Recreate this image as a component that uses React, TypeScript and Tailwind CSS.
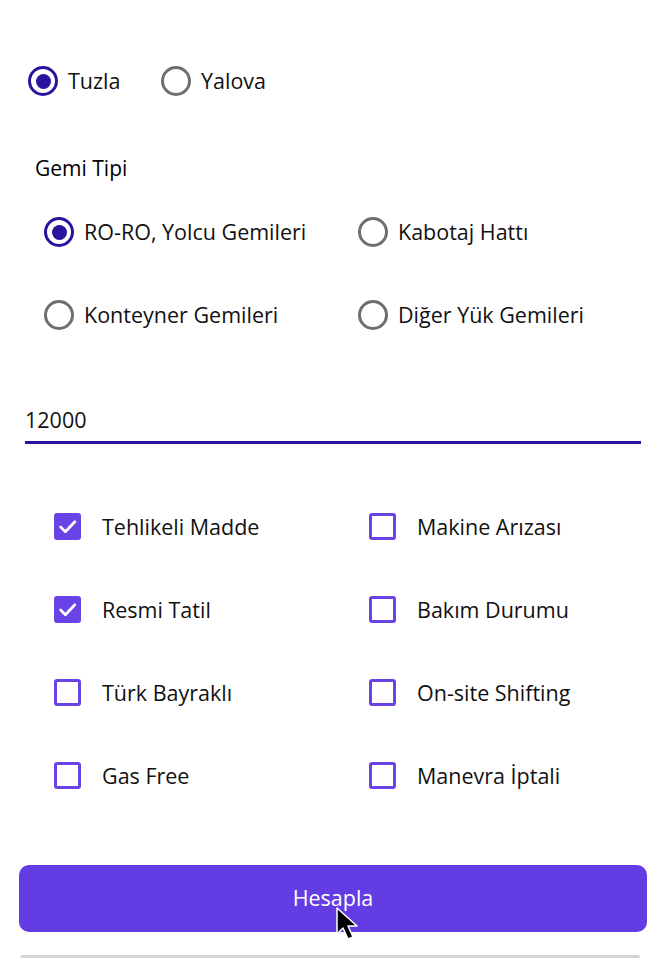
import { useState } from 'react';

const font = { fontFamily: '"Open Sans", "Noto Sans", sans-serif' };

function Radio({ label, checked, onClick }: { label: string; checked: boolean; onClick: () => void }) {
  return (
    <button onClick={onClick} className="flex items-center gap-[10px] h-[30px] text-left">
      <span
        className={`w-[30px] h-[30px] rounded-full border-[3px] flex items-center justify-center shrink-0 ${
          checked ? 'border-[#2b139e]' : 'border-[#6e6e6e]'
        }`}
      >
        {checked && <span className="w-[15px] h-[15px] rounded-full bg-[#2b139e]" />}
      </span>
      <span className="text-[21.5px] leading-[30px] text-[#111]">{label}</span>
    </button>
  );
}

function Check({ label, checked, onClick }: { label: string; checked: boolean; onClick: () => void }) {
  return (
    <button onClick={onClick} className="flex items-center gap-[21px] h-[27px] text-left">
      <span
        className={`w-[27px] h-[27px] rounded-[3px] flex items-center justify-center shrink-0 ${
          checked ? 'bg-[#6a43e6]' : 'border-[3px] border-[#6a43e6] bg-white'
        }`}
      >
        {checked && (
          <svg width="21" height="21" viewBox="0 0 20 20" fill="none">
            <path d="M3.5 10.5l4.5 4.5 9-9.5" stroke="white" strokeWidth="2.6" strokeLinecap="round" strokeLinejoin="round" />
          </svg>
        )}
      </span>
      <span className="text-[21.5px] leading-[30px] text-[#111]">{label}</span>
    </button>
  );
}

const shipTypes = ['RO-RO, Yolcu Gemileri', 'Kabotaj Hattı', 'Konteyner Gemileri', 'Diğer Yük Gemileri'];
const options = [
  'Tehlikeli Madde',
  'Makine Arızası',
  'Resmi Tatil',
  'Bakım Durumu',
  'Türk Bayraklı',
  'On-site Shifting',
  'Gas Free',
  'Manevra İptali',
];

export default function App() {
  const [port, setPort] = useState('Tuzla');
  const [shipType, setShipType] = useState(shipTypes[0]);
  const [checked, setChecked] = useState<string[]>(['Tehlikeli Madde', 'Resmi Tatil']);

  const toggle = (o: string) =>
    setChecked((c) => (c.includes(o) ? c.filter((x) => x !== o) : [...c, o]));

  return (
    <div className="relative w-[658px] h-[958px] overflow-hidden bg-white flex flex-col" style={font}>
      <div className="flex pl-[28px] pt-[66px]">
        <div className="w-[133px]">
          <Radio label="Tuzla" checked={port === 'Tuzla'} onClick={() => setPort('Tuzla')} />
        </div>
        <Radio label="Yalova" checked={port === 'Yalova'} onClick={() => setPort('Yalova')} />
      </div>

      <div className="mt-[57px] pl-[35px] text-[21px] leading-[30px] font-medium text-black">Gemi Tipi</div>

      <div className="mt-[34px] pl-[44px] grid grid-cols-[314px_1fr] gap-y-[53px]">
        {shipTypes.map((s) => (
          <Radio key={s} label={s} checked={shipType === s} onClick={() => setShipType(s)} />
        ))}
      </div>

      <div className="mt-[75px] mx-[25px] w-[616px]">
        <div className="h-[30px] flex items-center text-[21.5px] text-[#111]">12000</div>
        <div className="mt-[6px] h-[3px] bg-[#2b139e]" />
      </div>

      <div className="mt-[69px] pl-[54px] grid grid-cols-[315px_1fr] gap-y-[56px]">
        {options.map((o) => (
          <Check key={o} label={o} checked={checked.includes(o)} onClick={() => toggle(o)} />
        ))}
      </div>

      <button className="mt-[76px] mx-[19px] w-[628px] h-[67px] rounded-[10px] bg-[#633ce3] text-white text-[21.5px]">
        Hesapla
      </button>

      <div className="mt-[23px] mx-[20px] w-[620px] h-[3px] rounded-t bg-[#d4d4d4]" />

      <svg className="absolute left-[335px] top-[906px]" width="24" height="38" viewBox="0 0 24 38">
        <path d="M2 2v26l6-6 5 11 5-2-5-11h9z" fill="black" stroke="white" strokeWidth="1.5" strokeLinejoin="round" />
      </svg>
    </div>
  );
}
